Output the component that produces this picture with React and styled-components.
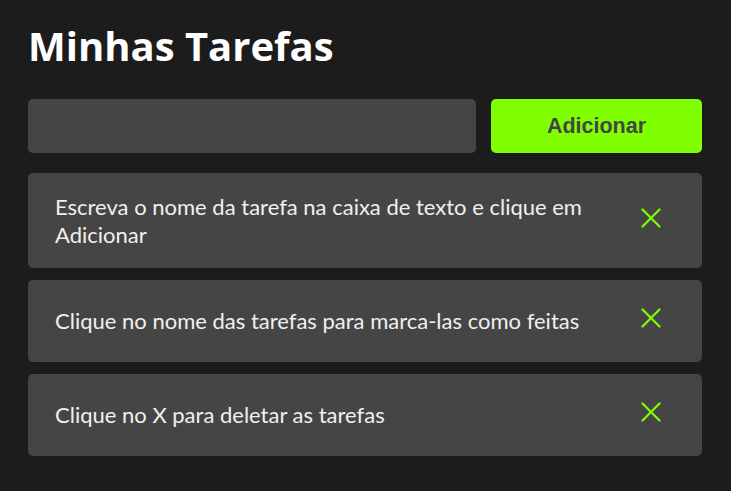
import React, { useState } from 'react';
import styled, { createGlobalStyle } from 'styled-components';

const GlobalStyle = createGlobalStyle`
  html, body {
    margin: 0;
    padding: 0;
    background: #1c1c1c;
  }
  body {
    font-family: Lato, 'Open Sans', sans-serif;
  }
`;

const Page = styled.div`
  padding: 18px 29px 20px 28px;
  display: flex;
  flex-direction: column;
`;

const Title = styled.h1`
  margin: 0 0 25px 0;
  color: #ffffff;
  font-family: 'Open Sans', sans-serif;
  font-size: 40px;
  line-height: 56px;
  font-weight: 700;
`;

const Form = styled.div`
  display: flex;
  gap: 15px;
  margin-bottom: 20px;
`;

const Input = styled.input`
  flex: 1;
  height: 54px;
  box-sizing: border-box;
  border: none;
  border-radius: 5px;
  background: #454545;
  color: #eee;
  padding: 0 16px;
  font-size: 18px;
  outline: none;
`;

const AddButton = styled.button`
  width: 211px;
  height: 54px;
  border: none;
  border-radius: 5px;
  background: #7fff00;
  color: #444;
  font-family: 'Liberation Sans', Arial, sans-serif;
  font-weight: 700;
  font-size: 21.5px;
  cursor: pointer;
`;

const List = styled.div`
  display: flex;
  flex-direction: column;
  gap: 12px;
`;

const Card = styled.div`
  display: flex;
  align-items: center;
  justify-content: space-between;
  gap: 40px;
  background: #454545;
  border-radius: 5px;
  padding: 20px 41px 20px 27px;
`;

const TaskText = styled.span`
  color: #f0f0f0;
  font-size: 22px;
  line-height: 27.5px;
  cursor: pointer;
  text-decoration: ${p => (p.$done ? 'line-through' : 'none')};
`;

const DeleteButton = styled.button`
  flex: none;
  width: 20px;
  height: 42px;
  padding: 8px 0 0;
  border: none;
  background: none;
  display: flex;
  align-items: flex-start;
  justify-content: center;
  cursor: pointer;
`;

const Cross = () => (
  <svg width="20" height="20" viewBox="0 0 20 20" fill="none">
    <path d="M1.5 1.5 L18.5 18.5 M18.5 1.5 L1.5 18.5" stroke="#7fff00" strokeWidth="2.2" strokeLinecap="round" />
  </svg>
);

const initial = [
  'Escreva o nome da tarefa na caixa de texto e clique em Adicionar',
  'Clique no nome das tarefas para marca-las como feitas',
  'Clique no X para deletar as tarefas',
];

export default function App() {
  const [tasks, setTasks] = useState(initial.map((t, i) => ({ id: i, text: t, done: false })));
  const [value, setValue] = useState('');

  const add = () => {
    if (!value.trim()) return;
    setTasks([...tasks, { id: Date.now(), text: value, done: false }]);
    setValue('');
  };

  return (
    <Page>
      <GlobalStyle />
      <Title>Minhas Tarefas</Title>
      <Form>
        <Input value={value} onChange={e => setValue(e.target.value)} />
        <AddButton onClick={add}>Adicionar</AddButton>
      </Form>
      <List>
        {tasks.map(t => (
          <Card key={t.id}>
            <TaskText
              $done={t.done}
              onClick={() => setTasks(tasks.map(x => (x.id === t.id ? { ...x, done: !x.done } : x)))}
            >
              {t.text}
            </TaskText>
            <DeleteButton onClick={() => setTasks(tasks.filter(x => x.id !== t.id))}>
              <Cross />
            </DeleteButton>
          </Card>
        ))}
      </List>
    </Page>
  );
}
